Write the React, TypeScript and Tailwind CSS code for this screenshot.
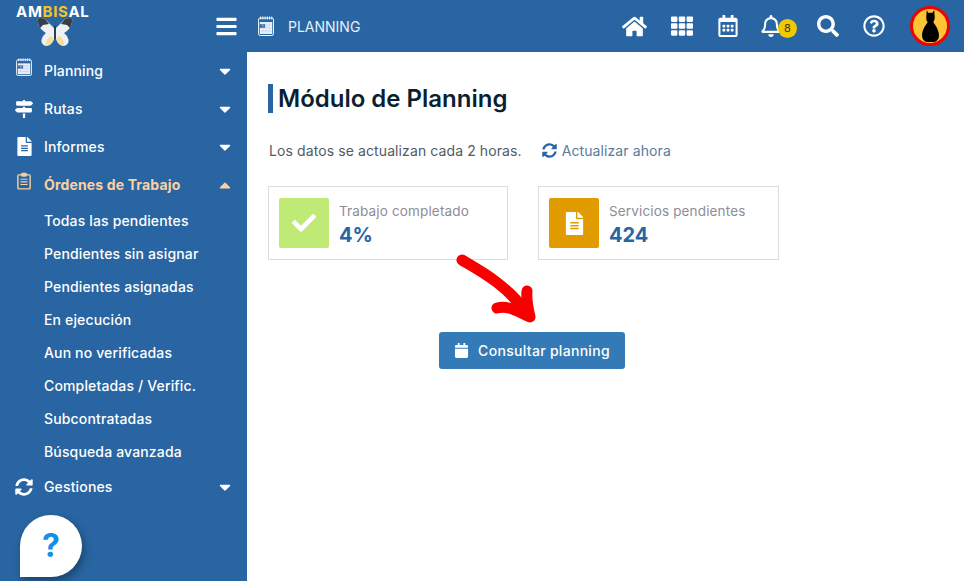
import {
  FaBars,
  FaCalendar,
  FaCaretDown,
  FaCaretUp,
  FaCheck,
  FaFileAlt,
  FaHome,
  FaMapSigns,
  FaRegBell,
  FaRegCalendarAlt,
  FaRegQuestionCircle,
  FaSearch,
  FaSyncAlt,
  FaTh,
} from "react-icons/fa";

const subItems = [
  "Todas las pendientes",
  "Pendientes sin asignar",
  "Pendientes asignadas",
  "En ejecución",
  "Aun no verificadas",
  "Completadas / Verific.",
  "Subcontratadas",
  "Búsqueda avanzada",
];

function CalendarGrid({ className }: { className: string }) {
  return (
    <svg viewBox="0 0 18 20" preserveAspectRatio="none" className={className}>
      <rect x="0.5" y="2" width="17" height="17.5" rx="2" fill="#2965a2" stroke="#fff" />
      <path d="M3 0.5v3M5.5 0.5v3M8 0.5v3M10.5 0.5v3M13 0.5v3M15.5 0.5v3" stroke="#fff" strokeWidth="1" />
      <rect x="2" y="6" width="14" height="12" fill="#eef3fa" />
      <rect x="2" y="8" width="6" height="4" fill="#2965a2" />
      <path d="M2 9h14M2 12h14M2 15h14M5.5 6v12M9 6v12M12.5 6v12" stroke="#b8cde6" strokeWidth="0.6" />
    </svg>
  );
}

function ClipboardIcon() {
  return (
    <svg viewBox="0 0 16 20" className="ml-[2px] h-[18px] w-[14px] -translate-y-[4px]" fill="none" stroke="#fcd0a0">
      <rect x="1" y="3" width="14" height="16" rx="1" strokeWidth="1.6" />
      <rect x="5" y="0.8" width="6" height="4" rx="1" fill="#fcd0a0" strokeWidth="0.5" />
      <path d="M4 8h8M4 11h8M4 14h8" strokeWidth="1.4" />
    </svg>
  );
}

function Butterfly() {
  return (
    <svg viewBox="0 0 36 30" className="h-[30px] w-[36px]">
      <path d="M17 11L8 2Q3 0 .5 2 1 8 4 12q3 3 5 4-5 4-4.500 9Q6 29 10 29q5-1 7-7z" fill="#eef1f2" />
      <path d="M19 11l9-9q5-2 7.500 0-.5 6-3.500 10-3 3-5 4 5 4 4.500 9-1.500 4-5.500 4-5-1-7-7z" fill="#eef1f2" />
      <path d="M.5 2Q3 0 8 2l4 5-6 1-3 3Q1 7 .5 2zM35.500 2Q33 0 28 2l-4 5 6 1 3 3q2-4 2.500-9z" fill="#3a3f45" />
      <path d="M9 28c3 1 6-2 8-6l-3-3c-3 1-5 5-5 9zM27 28c-3 1-6-2-8-6l3-3c3 1 5 5 5 9z" fill="#f6dd9c" />
      <rect x="17.200" y="9" width="1.600" height="13" fill="#333" />
    </svg>
  );
}

function CatAvatar() {
  return (
    <div className="flex h-[40px] w-[40px] items-center justify-center rounded-full border-[3.5px] border-[#f00000] bg-[#fdc435]">
      <svg viewBox="0 0 18 34" className="h-[32px] w-[17px]">
        <path
          d="M5 0l1.500 3H11l2-3 .5 8c0 2-1 4-1.500 5 3 4 6 9 6 14 0 4-2 6-5 7H5c-3-1-5-3-5-7 0-5 3-10 6-14-1-1-1.500-3-1.500-5z"
          fill="#000"
        />
      </svg>
    </div>
  );
}

function MenuItem({ icon, label, open }: { icon: React.ReactNode; label: string; open?: boolean }) {
  return (
    <div className={`flex h-[38px] items-center pr-[13px] pb-[1px] pl-[15px] text-[14px] tracking-[0.15px] ${open ? "font-bold text-[#fcd0a0]" : "font-medium text-white"}`}>
      <span className="flex w-[29px] shrink-0 justify-start">{icon}</span>
      <span className="flex-1">{label}</span>
      {open ? <FaCaretUp className="text-[18px]" /> : <FaCaretDown className="text-[18px] text-white" />}
    </div>
  );
}

function StatCard({ icon, color, label, value, width }: { icon: React.ReactNode; color: string; label: string; value: string; width: string }) {
  return (
    <div className={`flex h-[74px] items-center border border-[#dcdcdc] px-[10px] ${width}`}>
      <div className={`flex h-[50px] w-[50px] items-center justify-center rounded-[2px] ${color}`}>{icon}</div>
      <div className="ml-[10px] pt-[2px]">
        <div className="text-[13.500px] leading-[18px] tracking-[0.15px] text-[#8d8d94]">{label}</div>
        <div className="mt-[3px] text-[20px] leading-[24px] font-bold text-[#2965a2]">{value}</div>
      </div>
    </div>
  );
}

export default function App() {
  return (
    <div className="relative flex h-[581px] w-[964px] flex-col overflow-hidden bg-white font-['Inter',sans-serif]">
      <header className="flex h-[52px] shrink-0 items-center bg-[#2965a2] text-white">
        <div className="flex h-full w-[215px] flex-col items-start pt-[4px] pl-[16px]">
          <div className="text-[15px] leading-[15px] font-bold tracking-[0.7px]">
            AM<span className="text-[#fcc419]">BIS</span>AL
          </div>
          <div className="-mt-[2px] ml-[21px]">
            <Butterfly />
          </div>
        </div>
        <FaBars className="text-[23px]" />
        <div className="ml-[20px]">
          <CalendarGrid className="h-[20px] w-[16px]" />
        </div>
        <span className="ml-[14px] text-[14px] text-[#e8f0f8]">PLANNING</span>
        <div className="ml-auto flex items-center pr-[14px]">
          <FaHome className="text-[25px]" />
          <FaTh className="ml-[24px] text-[22px]" />
          <FaRegCalendarAlt className="ml-[24px] text-[22px]" />
          <div className="relative mr-[19px] ml-[21px]">
            <FaRegBell className="text-[22px]" />
            <span className="absolute top-[4px] left-[18px] flex h-[19px] w-[19px] items-center justify-center rounded-full bg-[#f0ca00] text-[11px] text-[#333]">
              8
            </span>
          </div>
          <FaSearch className="ml-[16px] text-[22px]" />
          <FaRegQuestionCircle className="ml-[24px] text-[22px]" />
          <div className="ml-[25px]">
            <CatAvatar />
          </div>
        </div>
      </header>

      <div className="flex flex-1">
        <aside className="w-[247px] shrink-0 bg-[#2965a2]">
          <MenuItem icon={<CalendarGrid className="ml-px h-[18px] w-[16px] -translate-y-[4px]" />} label="Planning" />
          <MenuItem icon={<FaMapSigns className="text-[18px]" />} label="Rutas" />
          <MenuItem icon={<FaFileAlt className="text-[19px]" />} label="Informes" />
          <MenuItem icon={<ClipboardIcon />} label="Órdenes de Trabajo" open />
          <ul className="pt-[1px] -mb-[1px]">
            {subItems.map((item) => (
              <li key={item} className="flex h-[33px] items-center pb-[2px] pl-[44px] text-[14px] font-medium tracking-[0.15px] text-white">
                {item}
              </li>
            ))}
          </ul>
          <MenuItem icon={<FaSyncAlt className="text-[18px]" />} label="Gestiones" />
        </aside>

        <main className="flex-1 pt-[32px] pl-[21px]">
          <h1 className="border-l-[5px] border-[#2965a2] pl-[5px] text-[24px] leading-[29px] font-semibold text-[#0b1f33]">
            Módulo de Planning
          </h1>
          <div className="mt-[27px] flex h-[20px] items-center text-[14px] tracking-[0.1px] text-[#4f5b66]">
            <span className="ml-px">Los datos se actualizan cada 2 horas.</span>
            <FaSyncAlt className="ml-[20px] text-[15px] text-[#2965a2]" />
            <span className="ml-[5px] text-[#5a7a9e]">Actualizar ahora</span>
          </div>
          <div className="mt-[26px] flex gap-[30px]">
            <StatCard width="w-[240px]" color="bg-[#bfea75]" icon={<FaCheck className="text-[24px] text-white" />} label="Trabajo completado" value="4%" />
            <StatCard width="w-[241px]" color="bg-[#e19b00]" icon={<FaFileAlt className="text-[23px] text-white" />} label="Servicios pendientes" value="424" />
          </div>
          <button className="mt-[72px] ml-[171px] flex h-[37px] w-[186px] items-center justify-center gap-[9px] rounded-[3px] bg-[#337ab7] text-[14px] font-medium tracking-[0.3px] text-white">
            <FaCalendar className="text-[15px]" />
            Consultar planning
          </button>
        </main>
      </div>

      <svg viewBox="0 0 90 80" className="absolute top-[250px] left-[450px] h-[80px] w-[90px]" fill="none" stroke="#f80000" strokeLinecap="round" strokeLinejoin="round">
        <path d="M12 10C28 20 55 33 76 62" strokeWidth="11" />
        <path d="M77 41C76 50 78 58 80 67 70 63 60 55 47 58" strokeWidth="11" />
        <path d="M74 50L78 66 60 58z" fill="#f80000" strokeWidth="6" />
      </svg>

      <div className="absolute top-[515px] left-[20px] flex h-[62px] w-[62px] items-center justify-center rounded-full rounded-bl-[6px] bg-white text-[32px] font-bold text-[#1590e8] shadow-[2px_4px_8px_rgba(0,0,0,0.35)]">
        ?
      </div>
    </div>
  );
}
